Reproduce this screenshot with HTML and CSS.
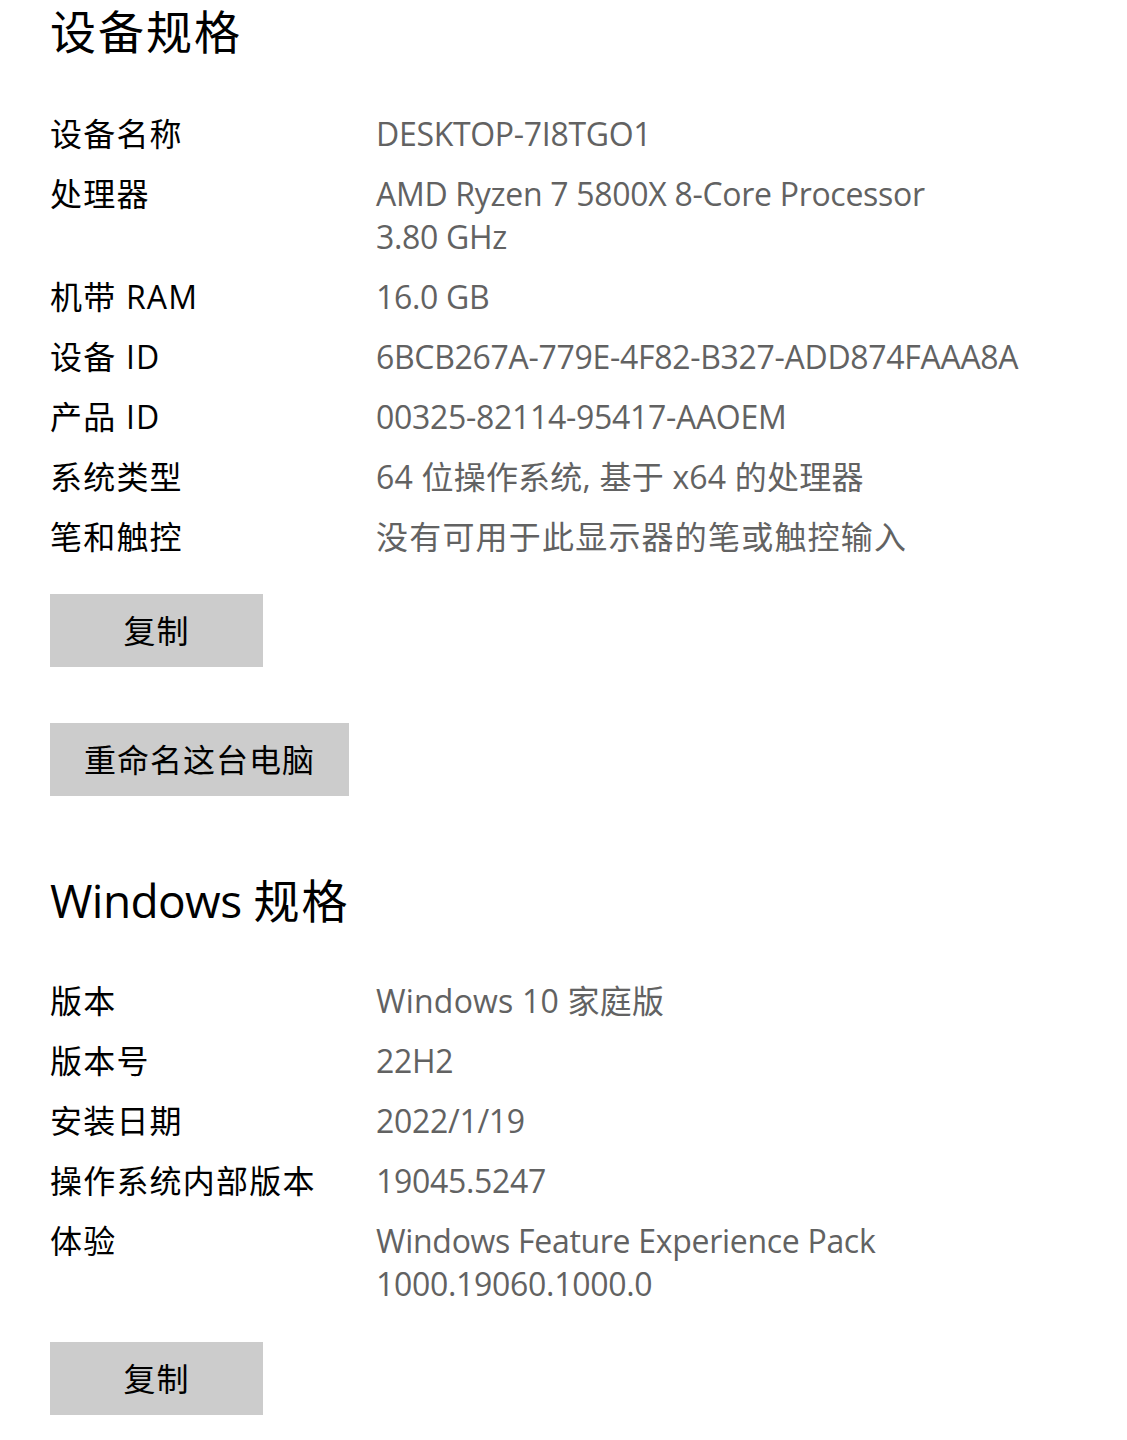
FILE: index.html
```html
<!DOCTYPE html>
<html lang="zh-CN">
<head>
<meta charset="utf-8">
<title>关于</title>
<link rel="stylesheet" href="styles.css">
</head>
<body>
<main class="page">
  <section class="section">
    <h2 class="title cjk-title">设备规格</h2>
    <dl class="spec-list">
      <div class="spec-row"><dt>设备名称</dt><dd>DESKTOP-7I8TGO1</dd></div>
      <div class="spec-row"><dt>处理器</dt><dd>AMD Ryzen 7 5800X 8-Core Processor<br>3.80 GHz</dd></div>
      <div class="spec-row"><dt>机带 RAM</dt><dd>16.0 GB</dd></div>
      <div class="spec-row"><dt>设备 ID</dt><dd>6BCB267A-779E-4F82-B327-ADD874FAAA8A</dd></div>
      <div class="spec-row"><dt>产品 ID</dt><dd>00325-82114-95417-AAOEM</dd></div>
      <div class="spec-row"><dt>系统类型</dt><dd class="mixed">64 位操作系统, 基于 x64 的处理器</dd></div>
      <div class="spec-row"><dt>笔和触控</dt><dd class="cjk">没有可用于此显示器的笔或触控输入</dd></div>
    </dl>
    <div class="actions">
      <button class="btn btn-copy" type="button">复制</button>
      <button class="btn btn-rename" type="button">重命名这台电脑</button>
    </div>
  </section>

  <section class="section section-windows">
    <h2 class="title"><span class="title-latin">Windows</span> <span class="cjk-title">规格</span></h2>
    <dl class="spec-list">
      <div class="spec-row"><dt>版本</dt><dd class="mixed">Windows 10 家庭版</dd></div>
      <div class="spec-row"><dt>版本号</dt><dd>22H2</dd></div>
      <div class="spec-row"><dt>安装日期</dt><dd>2022/1/19</dd></div>
      <div class="spec-row"><dt>操作系统内部版本</dt><dd>19045.5247</dd></div>
      <div class="spec-row"><dt>体验</dt><dd>Windows Feature Experience Pack<br>1000.19060.1000.0</dd></div>
    </dl>
    <div class="actions">
      <button class="btn btn-copy" type="button">复制</button>
    </div>
  </section>
</main>
</body>
</html>
```

FILE: styles.css
```css
html, body {
  margin: 0;
  padding: 0;
  background: #ffffff;
}

body {
  font-family: "Open Sans", "Noto Sans CJK SC", sans-serif;
  color: #000000;
  width: 1127px;
}

.page {
  padding: 0 0 0 50px;
  display: flex;
  flex-direction: column;
}

.section {
  display: flex;
  flex-direction: column;
}

.section-windows {
  margin-top: 73px;
}

.title {
  margin: 0;
  font-size: 46px;
  font-weight: 400;
  line-height: 62px;
  color: #000000;
  white-space: nowrap;
}

.cjk-title {
  letter-spacing: 2px;
}

.title-latin {
  letter-spacing: -0.6px;
}

.spec-list {
  margin: 50px 0 0 0;
  display: flex;
  flex-direction: column;
  gap: 17px;
}

.section-windows .spec-list {
  margin-top: 48px;
}

.spec-row {
  display: grid;
  grid-template-columns: 326px 1fr;
  font-size: 32px;
  line-height: 43px;
}

.spec-row dt {
  margin: 0;
  color: #000000;
  letter-spacing: 1.2px;
  white-space: nowrap;
}

.spec-row dd {
  margin: 0;
  color: #626262;
  letter-spacing: -0.3px;
  white-space: nowrap;
}

.spec-row dd.cjk {
  letter-spacing: 1.2px;
}

.spec-row dd.mixed {
  letter-spacing: 0.2px;
}

.actions {
  margin-top: 36px;
  display: flex;
  flex-direction: column;
  align-items: flex-start;
  gap: 56px;
}

.section-windows .actions {
  margin-top: 37px;
}

.btn {
  font-family: "Open Sans", "Noto Sans CJK SC", sans-serif;
  font-size: 32px;
  line-height: 43px;
  color: #000000;
  background: #cccccc;
  border: none;
  border-radius: 0;
  height: 73px;
  padding: 0 34px;
  margin: 0;
  letter-spacing: 1px;
  text-align: center;
  cursor: pointer;
}

.btn-copy {
  width: 213px;
}

.btn-rename {
  width: 299px;
}
```
